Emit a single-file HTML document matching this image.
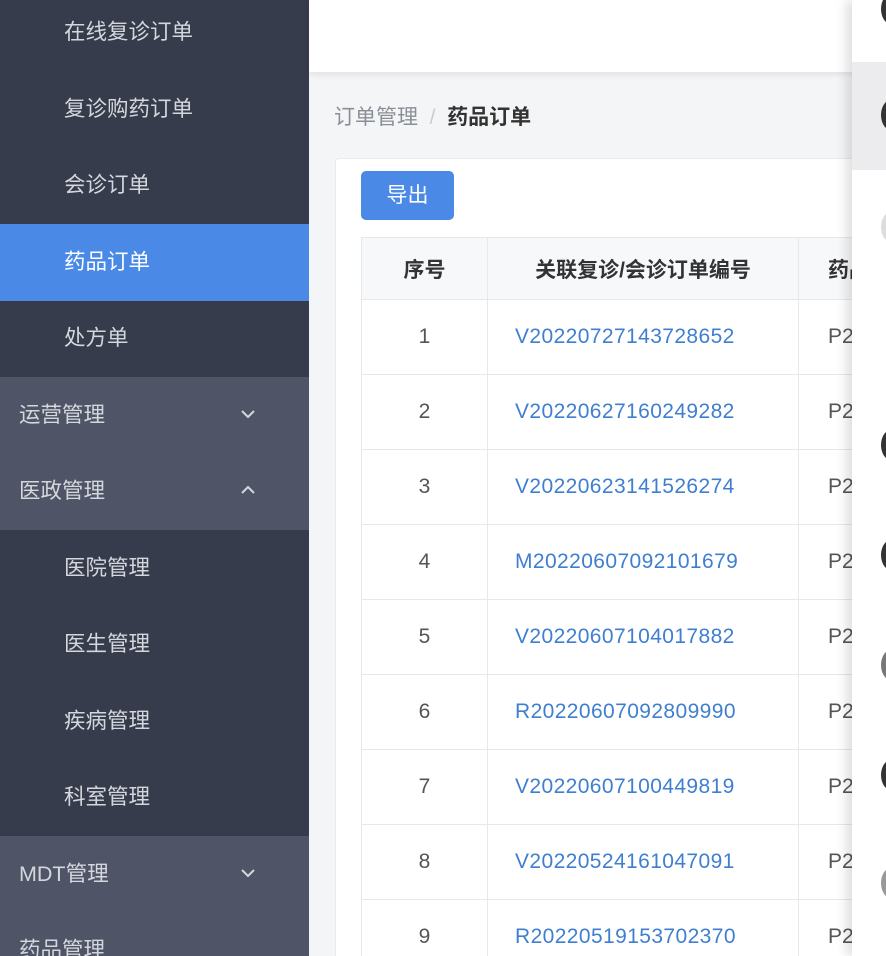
<!DOCTYPE html>
<html><head><meta charset="utf-8"><style>
*{margin:0;padding:0;box-sizing:border-box}
html,body{width:886px;height:956px;overflow:hidden}
body{position:relative;font-family:"Liberation Sans","Noto Sans CJK SC",sans-serif;background:#f4f5f7}
.side{position:absolute;left:0;top:0;width:309px;height:956px;background:#363c4b}
.it{position:absolute;left:0;width:309px;height:77px;line-height:77px;font-size:21.5px;color:#d4d7dd}
.sub{padding-left:64px}
.top{padding-left:19px;background:#4f5566}
.act{background:#4a8ae6;color:#fff}
.arr{position:absolute;left:241px;top:32px}
.hdr{position:absolute;left:309px;top:0;width:560px;height:72px;background:#fff;box-shadow:0 3px 6px rgba(0,0,0,.08)}
.bc{position:absolute;left:334px;top:101px;font-size:21px;color:#8a8e96}
.bc b{color:#333;font-weight:bold}
.card{position:absolute;left:335px;top:158px;width:560px;height:820px;background:#fff;border:1px solid #e8eaee;border-radius:4px}
.btn{position:absolute;left:361px;top:171px;width:93px;height:49px;background:#4a8ae6;color:#fff;border-radius:5px;font-size:21px;text-align:center;line-height:49px}
table{position:absolute;left:361px;top:237px;border-collapse:collapse;font-size:21px;table-layout:fixed;width:537px}
td,th{border:1px solid #e6e8ec;height:75px;text-align:center;color:#555;font-weight:normal;white-space:nowrap;overflow:hidden}
th{height:62px;background:#f7f8fa;color:#333;font-weight:bold}
td.l{color:#3f7fd0;text-align:left;padding-left:27px;letter-spacing:0.4px}
td.p{text-align:left;padding-left:29px}
.rp{position:absolute;left:852px;top:0;width:34px;height:956px;background:#fff;box-shadow:-6px 0 10px rgba(0,0,0,.12)}
.g{position:absolute;left:852px;top:62px;width:34px;height:108px;background:#ececee}
.c{position:absolute;left:881px;width:20px;height:30px;border-radius:50%;background:#333}
</style></head><body>
<div class="side">
<div class="it sub" style="top:-6px">在线复诊订单</div>
<div class="it sub" style="top:71px">复诊购药订单</div>
<div class="it sub" style="top:147px">会诊订单</div>
<div class="it sub act" style="top:224px">药品订单</div>
<div class="it sub" style="top:300px">处方单</div>
<div class="it top" style="top:377px">运营管理<svg class="arr" width="14" height="10" viewBox="0 0 14 10"><path d="M1 2l6 6 6-6" fill="none" stroke="#d4d7dd" stroke-width="2"/></svg></div>
<div class="it top" style="top:453px">医政管理<svg class="arr" width="14" height="10" viewBox="0 0 14 10"><path d="M1 8l6-6 6 6" fill="none" stroke="#d4d7dd" stroke-width="2"/></svg></div>
<div class="it sub" style="top:530px">医院管理</div>
<div class="it sub" style="top:606px">医生管理</div>
<div class="it sub" style="top:683px">疾病管理</div>
<div class="it sub" style="top:759px">科室管理</div>
<div class="it top" style="top:836px">MDT管理<svg class="arr" width="14" height="10" viewBox="0 0 14 10"><path d="M1 2l6 6 6-6" fill="none" stroke="#d4d7dd" stroke-width="2"/></svg></div>
<div class="it top" style="top:912px">药品管理</div>
</div>
<div class="hdr"></div>
<div class="bc">订单管理 &nbsp;<span style="color:#ccc">/</span>&nbsp; <b>药品订单</b></div>
<div class="card"></div>
<div class="btn">导出</div>
<table>
<colgroup><col style="width:126px"><col style="width:311px"><col style="width:100px"></colgroup>
<tr><th>序号</th><th>关联复诊/会诊订单编号</th><th style="text-align:left;padding-left:29px">药品</th></tr>
<tr><td>1</td><td class="l">V20220727143728652</td><td class="p">P2</td></tr>
<tr><td>2</td><td class="l">V20220627160249282</td><td class="p">P2</td></tr>
<tr><td>3</td><td class="l">V20220623141526274</td><td class="p">P2</td></tr>
<tr><td>4</td><td class="l">M20220607092101679</td><td class="p">P2</td></tr>
<tr><td>5</td><td class="l">V20220607104017882</td><td class="p">P2</td></tr>
<tr><td>6</td><td class="l">R20220607092809990</td><td class="p">P2</td></tr>
<tr><td>7</td><td class="l">V20220607100449819</td><td class="p">P2</td></tr>
<tr><td>8</td><td class="l">V20220524161047091</td><td class="p">P2</td></tr>
<tr><td>9</td><td class="l">R20220519153702370</td><td class="p">P2</td></tr>
</table>
<div class="rp"></div>
<div class="g"></div>
<div class="c" style="top:-6px"></div>
<div class="c" style="top:100px"></div>
<div class="c" style="top:212px;background:#ddd"></div>
<div class="c" style="top:430px"></div>
<div class="c" style="top:540px"></div>
<div class="c" style="top:650px;background:#777"></div>
<div class="c" style="top:760px"></div>
<div class="c" style="top:868px;background:#999"></div>
</body></html>
